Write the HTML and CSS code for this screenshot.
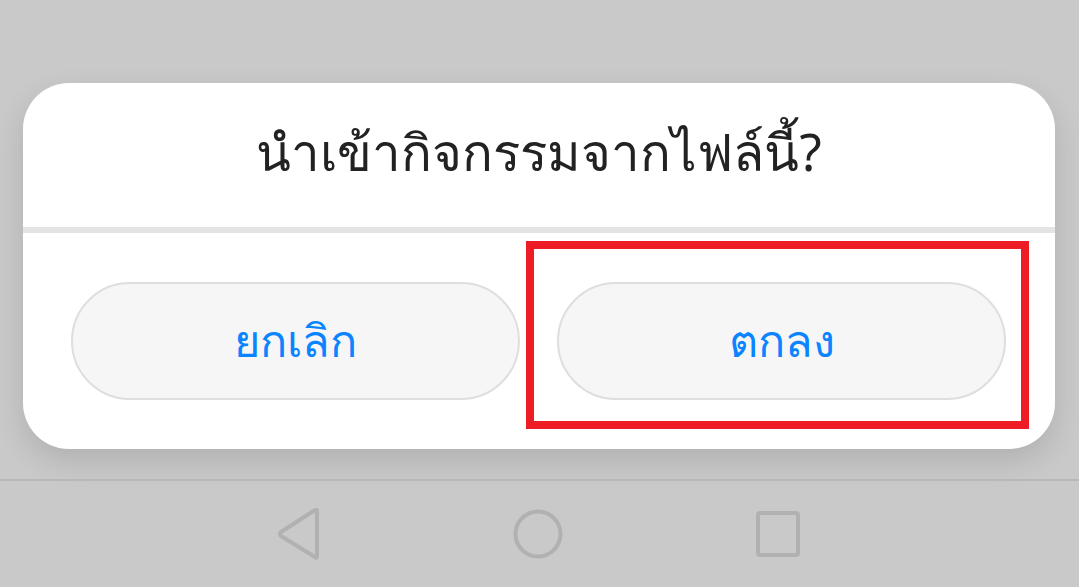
FILE: index.html
```html
<!DOCTYPE html>
<html lang="th">
<head>
    <meta charset="UTF-8">
    <meta name="viewport" content="width=device-width, initial-scale=1.0">
    <title>Import</title>
    <link rel="stylesheet" href="styles.css">
</head>
<body>
    <div class="screen">
        <div class="dialog">
            <div class="dialog-title">นำเข้ากิจกรรมจากไฟล์นี้?</div>
            <div class="dialog-divider"></div>
            <div class="dialog-actions">
                <button class="btn">ยกเลิก</button>
                <button class="btn btn-marked">ตกลง<span class="mark"></span></button>
            </div>
        </div>
    </div>

    <div class="navbar">
        <svg class="nav-icon" width="44" height="52" viewBox="0 0 44 52">
            <path d="M39 3 L39 48 Q39 51 37 49 L3 28 Q1 26 3 24 L37 2 Q39 1 39 3 Z" fill="none" stroke="#b1b1b1" stroke-width="4" stroke-linejoin="round"/>
        </svg>
        <svg class="nav-icon" width="52" height="52" viewBox="0 0 52 52">
            <circle cx="26" cy="26" r="22.5" fill="none" stroke="#b1b1b1" stroke-width="4"/>
        </svg>
        <svg class="nav-icon" width="48" height="52" viewBox="0 0 48 52">
            <rect x="4" y="5" width="40" height="42" rx="2" fill="none" stroke="#b1b1b1" stroke-width="4"/>
        </svg>
    </div>
</body>
</html>
```

FILE: styles.css
```css
body {
    margin: 0;
    background-color: #c9c9c9;
    font-family: "Noto Sans", "DejaVu Sans", sans-serif;
    height: 587px;
    overflow: hidden;
}

.screen {
    padding: 83px 24px 30px 23px;
}

.dialog {
    background-color: #fff;
    border-radius: 46px;
    box-shadow: 0 12px 30px rgba(0, 0, 0, 0.12);
    height: 366px;
    display: flex;
    flex-direction: column;
}

.dialog-title {
    height: 144px;
    display: flex;
    align-items: center;
    justify-content: center;
    padding-bottom: 6px;
    box-sizing: border-box;
    font-size: 51px;
    color: #222;
}

.dialog-divider {
    height: 6px;
    background-color: #e4e4e4;
}

.dialog-actions {
    flex: 1;
    display: flex;
    gap: 37px;
    padding: 49px 49px 49px 48px;
}

.btn {
    position: relative;
    flex: 1;
    border: 2px solid #dedede;
    border-radius: 60px;
    background-color: #f6f6f6;
    color: #0a84ff;
    font-family: inherit;
    font-size: 45px;
    font-weight: 500;
    padding: 0;
}

.mark {
    position: absolute;
    left: -33px;
    top: -43px;
    right: -25px;
    bottom: -31px;
    border: 8px solid #ee1c25;
}

.navbar {
    border-top: 2px solid #b8b8b8;
    height: 106px;
    display: flex;
    align-items: center;
    justify-content: center;
    gap: 190px;
}

.nav-icon {
    display: block;
}
```
